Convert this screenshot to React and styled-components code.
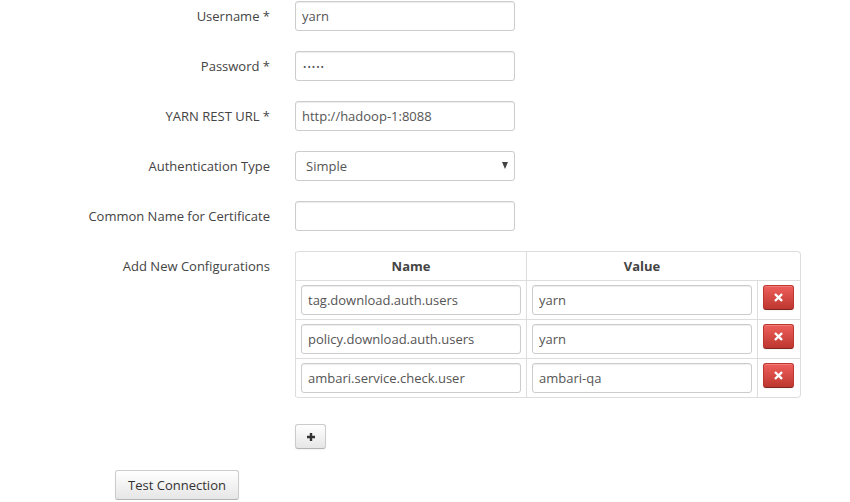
import React, { useState } from "react";
import styled, { createGlobalStyle } from "styled-components";

const GlobalStyle = createGlobalStyle`
  body {
    margin: 0;
    background: #fff;
    font-family: "Open Sans", "Liberation Sans", sans-serif;
    font-size: 13px;
    color: #444;
  }
`;

const Form = styled.form`
  display: grid;
  grid-template-columns: 270px 506px;
  column-gap: 25px;
  row-gap: 20px;
  padding-top: 1px;
`;

const Label = styled.label`
  text-align: right;
  line-height: 30px;
  color: #444;
  white-space: nowrap;
`;

const Input = styled.input`
  box-sizing: border-box;
  width: ${(p) => p.width || "220px"};
  height: 30px;
  padding: 4px 6px;
  border: 1px solid #ccc;
  border-radius: 3px;
  box-shadow: inset 0 1px 1px rgba(0, 0, 0, 0.075);
  font-family: inherit;
  font-size: 13px;
  color: #555;
  background: #fff;
  outline: none;
`;

const PasswordInput = styled(Input)`
  font-size: 9px;
  letter-spacing: 1px;
  padding-left: 7px;
`;

const SelectWrap = styled.div`
  position: relative;
  width: 220px;
`;

const Select = styled.select`
  box-sizing: border-box;
  width: 220px;
  height: 30px;
  padding: 4px 24px 4px 10px;
  border: 1px solid #ccc;
  border-radius: 3px;
  font-family: inherit;
  font-size: 13px;
  color: #555;
  background: #fff;
  appearance: none;
  -webkit-appearance: none;
  outline: none;
`;

const Arrow = styled.span`
  position: absolute;
  right: 7px;
  top: 11px;
  width: 0;
  height: 0;
  border-left: 3.5px solid transparent;
  border-right: 3.5px solid transparent;
  border-top: 7px solid #444;
  pointer-events: none;
`;

const Table = styled.table`
  width: 506px;
  border-collapse: separate;
  border-spacing: 0;
  border: 1px solid #ddd;
  border-left: 0;
  border-radius: 4px;
`;

const Th = styled.th`
  padding: 5px;
  line-height: 18px;
  font-weight: 700;
  color: #444;
  text-align: center;
  border-left: ${(p) => (p.$plain ? "0" : "1px solid #ddd")};
`;

const Td = styled.td`
  padding: 4px 5px;
  vertical-align: top;
  border-left: 1px solid #ddd;
  border-top: 1px solid #ddd;
  width: ${(p) => p.width || "auto"};
`;

const Btn = styled.button`
  box-sizing: border-box;
  font-family: inherit;
  font-size: 13px;
  color: #333;
  border: 1px solid #ccc;
  border-bottom-color: #b3b3b3;
  border-radius: 3px;
  background: linear-gradient(#ffffff, #e6e6e6);
  box-shadow: inset 0 1px 0 rgba(255, 255, 255, 0.2), 0 1px 2px rgba(0, 0, 0, 0.05);
  cursor: pointer;
  display: flex;
  align-items: center;
  justify-content: center;
`;

const DeleteBtn = styled(Btn)`
  width: 31px;
  height: 25px;
  padding: 0;
  border-color: #bd362f #bd362f #802420;
  background: linear-gradient(#ee5f5b, #bd362f);
  color: #fff;
`;

const AddBtn = styled(Btn)`
  width: 31px;
  height: 25px;
  padding: 0;
  margin-top: 26px;
`;

const TestBtn = styled(Btn)`
  width: 124px;
  height: 30px;
  padding: 4px 12px;
  margin-left: 115px;
`;

const Footer = styled.div`
  padding-top: 21px;
`;

const XIcon = () => (
  <svg width="9" height="9" viewBox="0 0 10 10">
    <path d="M2 2 L8 8 M8 2 L2 8" stroke="#fff" strokeWidth="2.6" strokeLinecap="square" />
  </svg>
);

const PlusIcon = () => (
  <svg width="10" height="10" viewBox="0 0 10 10">
    <path d="M5 1 V9 M1 5 H9" stroke="#333" strokeWidth="2.4" />
  </svg>
);

const initialConfigs = [
  { name: "tag.download.auth.users", value: "yarn" },
  { name: "policy.download.auth.users", value: "yarn" },
  { name: "ambari.service.check.user", value: "ambari-qa" },
];

export default function App() {
  const [configs, setConfigs] = useState(initialConfigs);

  const removeConfig = (i) => setConfigs(configs.filter((_, idx) => idx !== i));
  const addConfig = () => setConfigs([...configs, { name: "", value: "" }]);

  return (
    <>
      <GlobalStyle />
      <Form onSubmit={(e) => e.preventDefault()}>
        <Label>Username *</Label>
        <div>
          <Input defaultValue="yarn" />
        </div>

        <Label>Password *</Label>
        <div>
          <PasswordInput type="password" defaultValue="yarn1" />
        </div>

        <Label>YARN REST URL *</Label>
        <div>
          <Input defaultValue="http://hadoop-1:8088" />
        </div>

        <Label>Authentication Type</Label>
        <SelectWrap>
          <Select defaultValue="simple">
            <option value="simple">Simple</option>
            <option value="kerberos">Kerberos</option>
          </Select>
          <Arrow />
        </SelectWrap>

        <Label>Common Name for Certificate</Label>
        <div>
          <Input />
        </div>

        <Label>Add New Configurations</Label>
        <div>
          <Table>
            <thead>
              <tr>
                <Th>Name</Th>
                <Th>Value</Th>
                <Th $plain />
              </tr>
            </thead>
            <tbody>
              {configs.map((c, i) => (
                <tr key={i}>
                  <Td width="220px">
                    <Input width="220px" defaultValue={c.name} />
                  </Td>
                  <Td width="220px">
                    <Input width="220px" defaultValue={c.value} />
                  </Td>
                  <Td>
                    <DeleteBtn type="button" onClick={() => removeConfig(i)}>
                      <XIcon />
                    </DeleteBtn>
                  </Td>
                </tr>
              ))}
            </tbody>
          </Table>
          <AddBtn type="button" onClick={addConfig}>
            <PlusIcon />
          </AddBtn>
        </div>
      </Form>
      <Footer>
        <TestBtn type="button">Test Connection</TestBtn>
      </Footer>
    </>
  );
}
